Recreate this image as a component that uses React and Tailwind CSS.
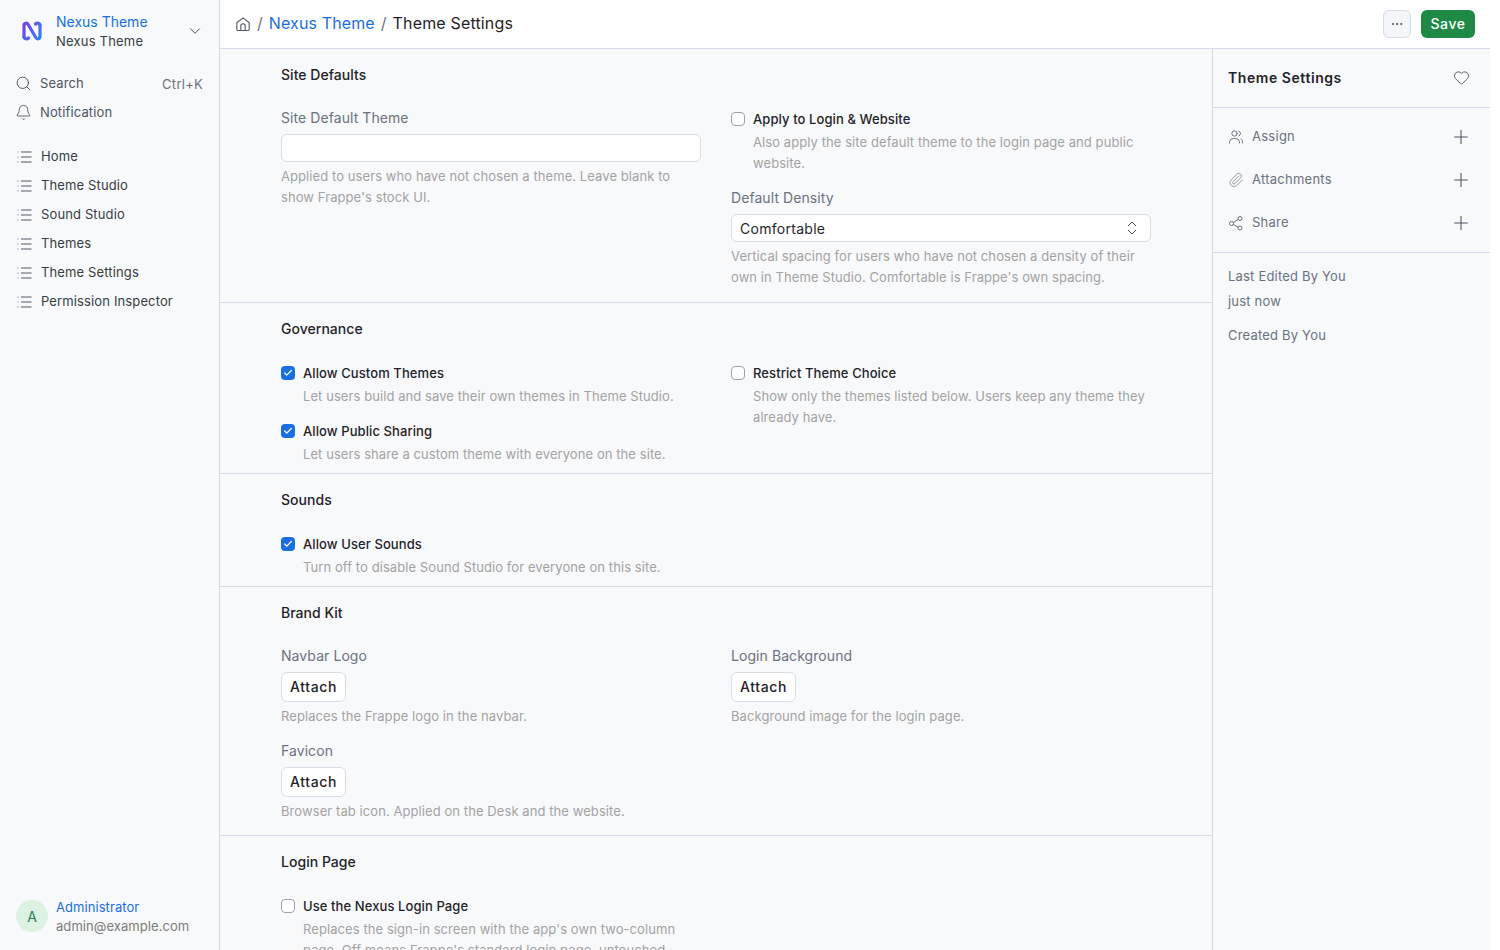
import React from "react";
import { ChevronDown, Search, Bell, Heart, Plus, Paperclip, Ellipsis, ChevronsUpDown, Check } from "lucide-react";

const NAV = ["Home", "Theme Studio", "Sound Studio", "Themes", "Theme Settings", "Permission Inspector"];

const Logo = () => (
  <svg width="22" height="22" viewBox="0 0 22 22" fill="none">
    <defs>
      <linearGradient id="nx" x1="1" y1="3" x2="21" y2="19" gradientUnits="userSpaceOnUse">
        <stop offset="0" stopColor="#7c3aed" />
        <stop offset="1" stopColor="#2f86f6" />
      </linearGradient>
    </defs>
    <path d="M3 16.500V5.500C3 2.800 6 2.500 7.200 4.500L14.800 17.500C16 19.500 19 19.200 19 16.500V5.500" stroke="url(#nx)" strokeWidth="3.200" strokeLinecap="round" strokeLinejoin="round" />
    <path d="M3 16.500C3 19 6 19.500 7.500 18M19 5.500C19 3 16 2.500 14.500 4" stroke="url(#nx)" strokeWidth="3.200" strokeLinecap="round" />
  </svg>
);

const ListIcon = () => (
  <svg width="16" height="16" viewBox="0 0 16 16" fill="none" className="shrink-0 text-[#525866]">
    <path d="M4 3h10.500M4 8h10.500M4 13h10.500" stroke="currentColor" strokeWidth="1.100" />
    <path d="M0.500 3h2M0.500 8h2M0.500 13h2" stroke="currentColor" strokeWidth="1.200" strokeDasharray="1 1" opacity="0.85" />
  </svg>
);

const HomeIcon = () => (
  <svg width="16" height="16" viewBox="0 0 16 16" fill="none" stroke="#525866" strokeWidth="1.100" strokeLinejoin="round">
    <path d="M1.800 6.800 8 1.900l6.200 4.900V13a1.500 1.500 0 0 1-1.500 1.500H3.300A1.500 1.500 0 0 1 1.800 13Z" />
    <path d="M5.800 14.500V10a2.200 2.200 0 0 1 4.400 0v4.500" />
  </svg>
);

const AssignIcon = () => (
  <svg width="16" height="16" viewBox="0 0 16 16" fill="none" stroke="#6b7280" strokeWidth="1" strokeLinecap="round">
    <circle cx="6.500" cy="4.500" r="2.700" />
    <path d="M1.500 14v-1.500a4 4 0 0 1 4-3h2a4 4 0 0 1 4 3V14" />
    <path d="M10.800 2a2.700 2.700 0 0 1 0 5M13 10c1 .6 1.500 1.500 1.500 2.700V14" />
  </svg>
);

const ShareIcon = () => (
  <svg width="16" height="16" viewBox="0 0 16 16" fill="none" stroke="#6b7280" strokeWidth="1">
    <circle cx="12" cy="3.500" r="2" />
    <circle cx="3.500" cy="8.500" r="2" />
    <circle cx="12" cy="13" r="2" />
    <path d="M5.300 7.500 10.200 4.500M5.300 9.500l4.900 2.700" />
  </svg>
);

const Help = ({ children, className = "" }) => (
  <p className={`text-[13px] leading-[21px] tracking-[0.006em] text-[#a3a3a3] ${className}`}>{children}</p>
);

const Label = ({ children }) => (
  <div className="text-[14px] leading-[20px] tracking-[0.005em] text-[#6b7280]">{children}</div>
);

const Box = ({ on }) =>
  on ? (
    <span className="mt-[3px] flex h-[14px] w-[14px] shrink-0 items-center justify-center rounded-[4px] bg-[#1a6fe0]">
      <Check size={10} strokeWidth={3} className="text-white" />
    </span>
  ) : (
    <span className="mt-[3px] h-[14px] w-[14px] shrink-0 rounded-[4px] border border-[#9ca3af] bg-white" />
  );

const CheckField = ({ on, title, children }) => (
  <div className="flex gap-2">
    <Box on={on} />
    <div className="min-w-0">
      <div className="text-[13px] font-medium leading-[20px] tracking-[0.007em] text-[#1f2329]">{title}</div>
      <Help className="mt-[3px]">{children}</Help>
    </div>
  </div>
);

const Attach = () => (
  <button className="mt-[6px] block h-[30px] rounded-[6px] border border-[#d8dee8] bg-white px-2 text-[14px] font-medium tracking-[0.045em] text-[#1f2329]">
    <span className="relative -top-px">Attach</span>
  </button>
);

const Section = ({ title, children, className = "", last }) => (
  <section className={`pl-[61px] pr-[61px] ${last ? "" : "border-b border-[#d3dce8]"} ${className}`}>
    <h2 className="text-[14px] font-medium leading-[20px] tracking-[0.002em] text-[#1f2329]">{title}</h2>
    {children}
  </section>
);

const SideAction = ({ icon, label }) => (
  <div className="flex h-[43px] items-center justify-between pr-[18px]">
    <div className="flex items-center gap-2 text-[13px] tracking-[0.02em] text-[#6b7280]">
      <span className="flex w-4 shrink-0 justify-center">{icon}</span>
      {label}
    </div>
    <Plus size={22} strokeWidth={1.200} className="text-[#525866]" />
  </div>
);

export default function App() {
  return (
    <div className="h-[950px] w-[1500px] overflow-hidden bg-white font-['Inter',sans-serif]">
      <div className="flex h-full w-[1490px]">
        <aside className="flex h-full w-[220px] shrink-0 flex-col border-r border-[#d3dce8] bg-[#f8f9fb]">
          <div className="flex h-[62px] items-center pl-[21px] pr-[15px]">
            <Logo />
            <div className="ml-[13px] flex-1">
              <div className="text-[14px] leading-[20px] text-[#1a6fe0]">Nexus Theme</div>
              <div className="text-[13px] leading-[19px] tracking-[0.015em] text-[#373c45]">Nexus Theme</div>
            </div>
            <ChevronDown size={18} strokeWidth={1.100} className="text-[#333]" />
          </div>
          <div className="mt-[7px] flex h-[29px] items-center pl-[15px] pr-4 text-[13px] tracking-[0.01em] text-[#4b5563]">
            <Search size={17} strokeWidth={1.200} className="mr-2 text-[#374151]" />
            <span className="flex-1">Search</span>
            <span className="mt-[3px] tracking-[0.02em] text-[#6b7280]">Ctrl+K</span>
          </div>
          <div className="flex h-[29px] items-center pl-[15px] text-[13px] tracking-[0.01em] text-[#4b5563]">
            <Bell size={17} strokeWidth={1.100} className="mr-2 text-[#374151]" />
            Notification
          </div>
          <nav className="mt-[15px]">
            {NAV.map((n) => (
              <div key={n} className="flex h-[29px] items-center gap-2 pl-[17px] text-[13px] tracking-[0.01em] text-[#373c45]">
                <ListIcon />
                {n}
              </div>
            ))}
          </nav>
          <div className="mt-auto mb-[14px] flex items-center pl-4">
            <div className="flex h-8 w-8 items-center justify-center rounded-full bg-[#dcf2e2] text-[14px] text-[#2f7d57]">A</div>
            <div className="ml-2 mt-[2px]">
              <div className="text-[13px] leading-[19px] tracking-[0.005em] text-[#1a6fe0]">Administrator</div>
              <div className="text-[13px] leading-[19px] tracking-[0.005em] text-[#7c7c7c]">admin@example.com</div>
            </div>
          </div>
        </aside>

        <div className="flex min-w-0 flex-1 flex-col">
          <header className="flex h-[49px] shrink-0 items-center border-b border-[#d3dce8] bg-white pb-[1px] pl-[15px] pr-[15px]">
            <HomeIcon />
            <span className="mx-[6px] mb-[2px] text-[16px] text-[#6b7280]">/</span>
            <span className="mb-[2px] text-[16px] tracking-[0.008em] text-[#1a6fe0]">Nexus Theme</span>
            <span className="mx-[6px] mb-[2px] text-[16px] text-[#6b7280]">/</span>
            <span className="mb-[2px] text-[16px] tracking-[0.01em] text-[#1f2329]">Theme Settings</span>
            <div className="ml-auto flex items-center gap-[10px]">
              <button className="flex h-[28px] w-[28px] items-center justify-center rounded-[6px] border border-[#d8dee8] bg-[#f4f6f9]">
                <Ellipsis size={14} strokeWidth={1.500} className="text-[#374151]" />
              </button>
              <button className="h-[28px] w-[54px] rounded-[6px] bg-[#1f8a45] text-[14px] font-medium tracking-[0.04em] text-white">Save</button>
            </div>
          </header>

          <div className="flex min-h-0 flex-1">
            <main className="w-[993px] shrink-0 overflow-hidden border-r border-[#d3dce8] bg-[#f8f9fb]">
              <Section title="Site Defaults" className="h-[254px] pt-[16px]">
                <div className="mt-[24px] grid grid-cols-[420px_420px] gap-x-[30px]">
                  <div className="-mt-px">
                    <Label>Site Default Theme</Label>
                    <div className="mt-[6px] h-[28px] rounded-[6px] border border-[#d8dee8] bg-white" />
                    <Help className="mt-[4px]">Applied to users who have not chosen a theme. Leave blank to show Frappe's stock UI.</Help>
                  </div>
                  <div>
                    <CheckField title="Apply to Login & Website">Also apply the site default theme to the login page and public website.</CheckField>
                    <div className="mt-[14px]"><Label>Default Density</Label></div>
                    <div className="mt-[6px] flex h-[28px] items-center justify-between rounded-[6px] border border-[#d8dee8] bg-white pl-2 pr-[9px] text-[14px] tracking-[0.02em] text-[#1f2329]">
                      Comfortable
                      <ChevronsUpDown size={18} strokeWidth={1.300} className="text-[#374151]" />
                    </div>
                    <Help className="mt-[4px]">Vertical spacing for users who have not chosen a density of their own in Theme Studio. Comfortable is Frappe's own spacing.</Help>
                  </div>
                </div>
              </Section>

              <Section title="Governance" className="h-[171px] pt-[16px]">
                <div className="mt-[24px] grid grid-cols-[420px_420px] gap-x-[30px]">
                  <div className="flex flex-col gap-[14px]">
                    <CheckField on title="Allow Custom Themes">Let users build and save their own themes in Theme Studio.</CheckField>
                    <CheckField on title="Allow Public Sharing">Let users share a custom theme with everyone on the site.</CheckField>
                  </div>
                  <CheckField title="Restrict Theme Choice">Show only the themes listed below. Users keep any theme they already have.</CheckField>
                </div>
              </Section>

              <Section title="Sounds" className="h-[113px] pt-[16px]">
                <div className="mt-[24px]">
                  <CheckField on title="Allow User Sounds">Turn off to disable Sound Studio for everyone on this site.</CheckField>
                </div>
              </Section>

              <Section title="Brand Kit" className="h-[249px] pt-[16px]">
                <div className="mt-[23px] grid grid-cols-[420px_420px] gap-x-[30px]">
                  <div>
                    <Label>Navbar Logo</Label>
                    <Attach />
                    <Help className="mt-[4px]">Replaces the Frappe logo in the navbar.</Help>
                  </div>
                  <div>
                    <Label>Login Background</Label>
                    <Attach />
                    <Help className="mt-[4px]">Background image for the login page.</Help>
                  </div>
                  <div className="mt-[14px]">
                    <Label>Favicon</Label>
                    <Attach />
                    <Help className="mt-[4px]">Browser tab icon. Applied on the Desk and the website.</Help>
                  </div>
                </div>
              </Section>

              <Section title="Login Page" last className="pt-[16px]">
                <div className="mt-[24px] w-[420px]">
                  <CheckField title="Use the Nexus Login Page">Replaces the sign-in screen with the app's own two-column page. Off means Frappe's standard login page, untouched.</CheckField>
                </div>
              </Section>
            </main>

            <aside className="min-w-0 flex-1 bg-[#f8f9fb]">
              <div className="flex h-[59px] items-center justify-between border-b border-[#d3dce8] pb-[2px] pl-[15px] pr-[20px]">
                <span className="text-[14px] font-semibold tracking-[0.04em] text-[#1f2329]">Theme Settings</span>
                <Heart size={17} strokeWidth={1.100} className="text-[#374151]" />
              </div>
              <div className="border-b border-[#d3dce8] pb-[8px] pl-[15px] pt-[7px]">
                <SideAction icon={<AssignIcon />} label="Assign" />
                <SideAction icon={<Paperclip size={16} strokeWidth={1} className="text-[#6b7280]" />} label="Attachments" />
                <SideAction icon={<ShareIcon />} label="Share" />
              </div>
              <div className="pl-[15px] pt-[13px] text-[13px] leading-[20px] tracking-[0.015em] text-[#6b7280]">
                <div>Last Edited By You</div>
                <div className="mt-[5px]">just now</div>
                <div className="mt-[14px]">Created By You</div>
              </div>
            </aside>
          </div>
        </div>
      </div>
    </div>
  );
}
